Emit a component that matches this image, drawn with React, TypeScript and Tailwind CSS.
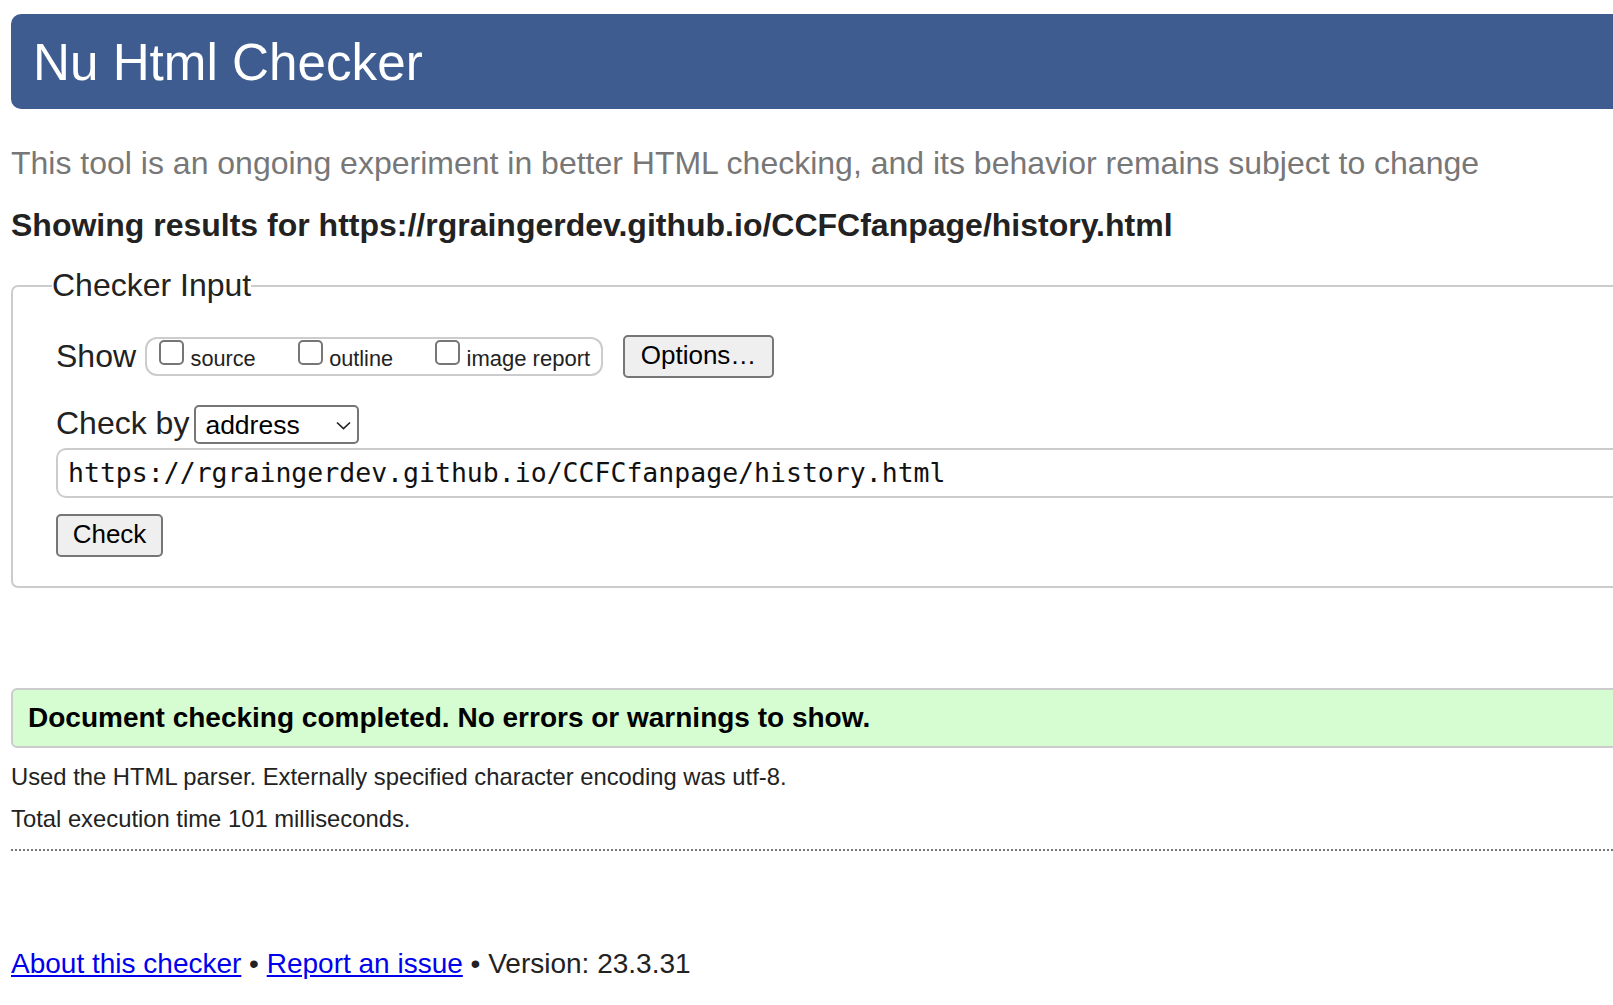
export default function App() {
  const url = "https://rgraingerdev.github.io/CCFCfanpage/history.html";
  return (
    <div className="min-h-screen w-full overflow-hidden bg-white pl-[11px] font-['Liberation_Sans',Arial,sans-serif] text-[#222]">
      <h1 className="mt-[14px] mr-[-40px] h-[95px] rounded-l-[10px] bg-[#3e5c8f] pl-[22px] pt-[2px] text-[51.2px] font-normal leading-[93px] text-white">
        Nu Html Checker
      </h1>
      <p className="mt-[34px] text-[32px] leading-[40px] text-[#777]">
        This tool is an ongoing experiment in better HTML checking, and its behavior remains subject to change
      </p>
      <h2 className="mt-[22px] text-[32px] font-bold leading-[40px] text-[#222]">
        Showing results for {url}
      </h2>
      <fieldset className="mt-[22px] mr-[-40px] rounded-[7px] border-2 border-[#ccc]">
        <legend className="ml-[39px] pb-[2px] text-[32px] leading-[36px] text-[#222]">Checker Input</legend>
        <div className="pl-[43px] pt-[30px] pb-[28.5px]">
          <div className="flex h-[42.5px] items-center">
            <span className="text-[32px] leading-[42px]">Show</span>
            <div className="ml-[9px] flex h-[38.5px] w-[458px] items-start rounded-[12px] border-2 border-[#ccc] pl-[12px] pt-[0.5px]">
              <label className="flex items-start">
                <input type="checkbox" className="m-0 h-[25px] w-[25px] appearance-none rounded-[5px] border-2 border-[#767676] bg-white" />
                <span className="ml-[6.5px] mt-[6px] text-[21.7px] leading-[25px]">source</span>
              </label>
              <label className="ml-[42px] flex items-start">
                <input type="checkbox" className="m-0 h-[25px] w-[25px] appearance-none rounded-[5px] border-2 border-[#767676] bg-white" />
                <span className="ml-[6.5px] mt-[6px] text-[21.7px] leading-[25px]">outline</span>
              </label>
              <label className="ml-[42px] flex items-start">
                <input type="checkbox" className="m-0 h-[25px] w-[25px] appearance-none rounded-[5px] border-2 border-[#767676] bg-white" />
                <span className="ml-[6.5px] mt-[6px] text-[22px] leading-[25px]">image report</span>
              </label>
            </div>
            <button className="ml-[20px] h-[42.5px] w-[151px] rounded-[5px] border-2 border-[#767676] bg-[#efefef] pb-[3px] text-[26px] leading-[30px] text-black">
              Options…
            </button>
          </div>
          <div className="mt-[27px] flex items-baseline">
            <span className="text-[32px] leading-[36px]">Check by</span>
            <div className="relative ml-[5px] h-[38.5px] w-[164.3px]">
              <select className="h-full w-full appearance-none rounded-[5px] border-2 border-[#767676] bg-white pl-[9px] text-[26.5px] leading-[30px] text-black outline-none">
                <option>address</option>
              </select>
              <svg className="pointer-events-none absolute right-[8px] top-[16px]" width="15" height="9" viewBox="0 0 15 9">
                <path d="M1 1.5 L7.5 7.5 L14 1.5" stroke="#222" strokeWidth="1.7" fill="none" />
              </svg>
            </div>
          </div>
          <input
            readOnly
            value={url}
            className="mt-[4px] block h-[50px] w-[1700px] rounded-[10px] border-2 border-[#ccc] bg-white pl-[10px] font-['DejaVu_Sans_Mono',monospace] text-[26.5px] text-[#111] outline-none"
          />
          <button className="mt-[16px] block h-[43.5px] w-[107px] rounded-[5px] border-2 border-[#767676] bg-[#efefef] pb-[3px] text-[26px] leading-[30px] text-black">
            Check
          </button>
        </div>
      </fieldset>
      <div className="mt-[100px] mr-[-40px] h-[60.5px] rounded-[6px] border-2 border-[#ccc] bg-[#d6fdd1] pl-[15px] pt-[12px] text-[28px] font-bold leading-[32px] text-black">
        Document checking completed. No errors or warnings to show.
      </div>
      <p className="mt-[14px] text-[23.8px] leading-[30px]">
        Used the HTML parser. Externally specified character encoding was utf-8.
      </p>
      <p className="mt-[12px] text-[23.8px] leading-[30px]">Total execution time 101 milliseconds.</p>
      <div className="mt-[15px] mr-[-40px] border-t-2 border-dotted border-[#777]" />
      <p className="mt-[95.5px] pb-[20px] text-[28px] leading-[34px]">
        <a href="#" className="text-[#0000ee] underline">About this checker</a>
        {" • "}
        <a href="#" className="text-[#0000ee] underline">Report an issue</a>
        {" • Version: 23.3.31"}
      </p>
    </div>
  );
}
